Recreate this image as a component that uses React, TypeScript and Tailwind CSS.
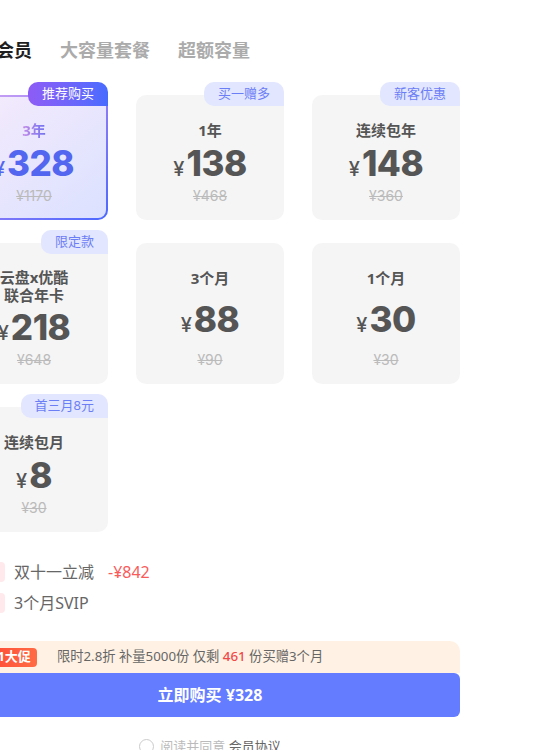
import React from "react";

type Plan = {
  title: string[];
  price: string;
  orig: string;
  badge?: string;
  selected?: boolean;
};

const plans: Plan[] = [
  { title: ["3年"], price: "328", orig: "¥1170", badge: "推荐购买", selected: true },
  { title: ["1年"], price: "138", orig: "¥468", badge: "买一赠多" },
  { title: ["连续包年"], price: "148", orig: "¥360", badge: "新客优惠" },
  { title: ["云盘x优酷", "联合年卡"], price: "218", orig: "¥648", badge: "限定款" },
  { title: ["3个月"], price: "88", orig: "¥90" },
  { title: ["1个月"], price: "30", orig: "¥30" },
  { title: ["连续包月"], price: "8", orig: "¥30", badge: "首三月8元" },
];

const num = { fontFamily: "Inter, 'Noto Sans CJK SC', sans-serif" };

function PlanCard({ plan }: { plan: Plan }) {
  const multi = plan.title.length > 1;
  const body = (
    <div className="flex h-full flex-col items-center justify-between text-center">
      <div
        className={`text-[15px] font-bold ${multi ? "leading-[18px]" : "leading-[20px]"} ${
          plan.selected
            ? "bg-linear-to-r from-[#c58ae8] to-[#6f72f0] bg-clip-text text-transparent"
            : "text-[#555]"
        }`}
      >
        {plan.title.map((t) => (
          <div key={t}>{t}</div>
        ))}
      </div>
      <div className="flex h-[46px] items-center justify-center">
        <div
          className={`flex items-baseline leading-none ${
            plan.selected ? "text-[#5366ef]" : "text-[#555]"
          }`}
          style={num}
        >
          <span className="mr-[2px] text-[20px] font-medium">¥</span>
          <span className="text-[35px] font-extrabold tracking-[-0.5px]">{plan.price}</span>
        </div>
      </div>
      <div className="text-[14px] leading-[20px] text-[#bbb] line-through" style={num}>
        {plan.orig}
      </div>
    </div>
  );

  return (
    <div className="relative">
      {plan.selected ? (
        <div className="h-full rounded-[10px] bg-linear-to-br from-[#d7a8f2] via-[#8f7cf6] to-[#4a68ff] p-[2px]">
          <div className="h-full rounded-[8px] bg-linear-to-br from-[#f6ebfc] to-[#dbe1ff] pb-[12px] pt-[23px]">
            {body}
          </div>
        </div>
      ) : (
        <div className="h-full rounded-[10px] bg-[#f5f5f5] pb-[14px] pt-[25px]">{body}</div>
      )}
      {plan.badge && (
        <div
          className={`absolute right-0 top-[-13px] flex h-[24px] items-center rounded-bl-[10px] rounded-tl-[10px] rounded-tr-[10px] px-[14px] text-[13px] ${
            plan.selected
              ? "bg-linear-to-r from-[#8d5cf6] to-[#476bff] text-white"
              : "bg-[#e2e6ff] text-[#6c7ef5]"
          }`}
        >
          {plan.badge}
        </div>
      )}
    </div>
  );
}

export default function App() {
  return (
    <div
      className="h-[750px] w-[550px] overflow-hidden bg-white"
      style={{ fontFamily: "'Noto Sans', 'Noto Sans CJK SC', sans-serif" }}
    >
      <div className="ml-[-40px] w-[500px]">
        {/* Tabs */}
        <div className="flex gap-[28px] pt-[37px] text-[18px] font-bold leading-[26px]">
          <span className="text-[#1f1f1f]">超级会员</span>
          <span className="text-[#ababab]">大容量套餐</span>
          <span className="text-[#ababab]">超额容量</span>
        </div>

        {/* Plans */}
        <div className="mt-[32px] grid grid-cols-3 gap-x-[28px] gap-y-[23px]">
          {plans.map((p) => (
            <PlanCard key={p.price + p.title[0]} plan={p} />
          ))}
        </div>

        {/* Benefits */}
        <div className="mt-[29px] flex flex-col gap-[9px] text-[16px] leading-[22px] text-[#666]">
          <div className="flex items-center gap-[9px]">
            <span className="flex h-[20px] w-[45px] items-center justify-center rounded-[4px] bg-[#ffe9ec] text-[11px] text-[#ff5a5a]">
              立减
            </span>
            <span>双十一立减</span>
            <span className="ml-[5px] text-[#f95a5a]">-¥842</span>
          </div>
          <div className="flex items-center gap-[9px]">
            <span className="flex h-[20px] w-[45px] items-center justify-center rounded-[4px] bg-[#ffe9ec] text-[11px] text-[#ff5a5a]">
              赠送
            </span>
            <span>3个月SVIP</span>
          </div>
        </div>

        {/* Promo + buy */}
        <div className="mt-[27px]">
          <div className="flex h-[32px] items-center rounded-t-[10px] bg-[#fff2e4] pl-[11px]">
            <span className="flex h-[19px] items-center rounded-[4px] bg-linear-to-r from-[#ff3a2f] to-[#ff6b45] px-[6px] text-[13px] font-bold text-white">
              双11大促
            </span>
            <span className="ml-[20px] text-[13.3px] text-[#666]">
              限时2.8折 补量5000份 仅剩 <span className="font-medium text-[#f04848]">461</span> 份买赠3个月
            </span>
          </div>
          <button className="flex h-[44px] w-full items-center justify-center rounded-[6px] bg-[#647cff] text-[16px] font-bold text-white">
            立即购买 ¥328
          </button>
        </div>

        {/* Agreement */}
        <div className="mt-[21px] flex items-center justify-center gap-[6px] text-[13px] leading-[16px]">
          <span className="h-[15px] w-[15px] rounded-full border border-[#ccc]" />
          <span className="text-[#bbb]">
            阅读并同意 <span className="text-[#666]">会员协议</span>
          </span>
        </div>
      </div>
    </div>
  );
}
